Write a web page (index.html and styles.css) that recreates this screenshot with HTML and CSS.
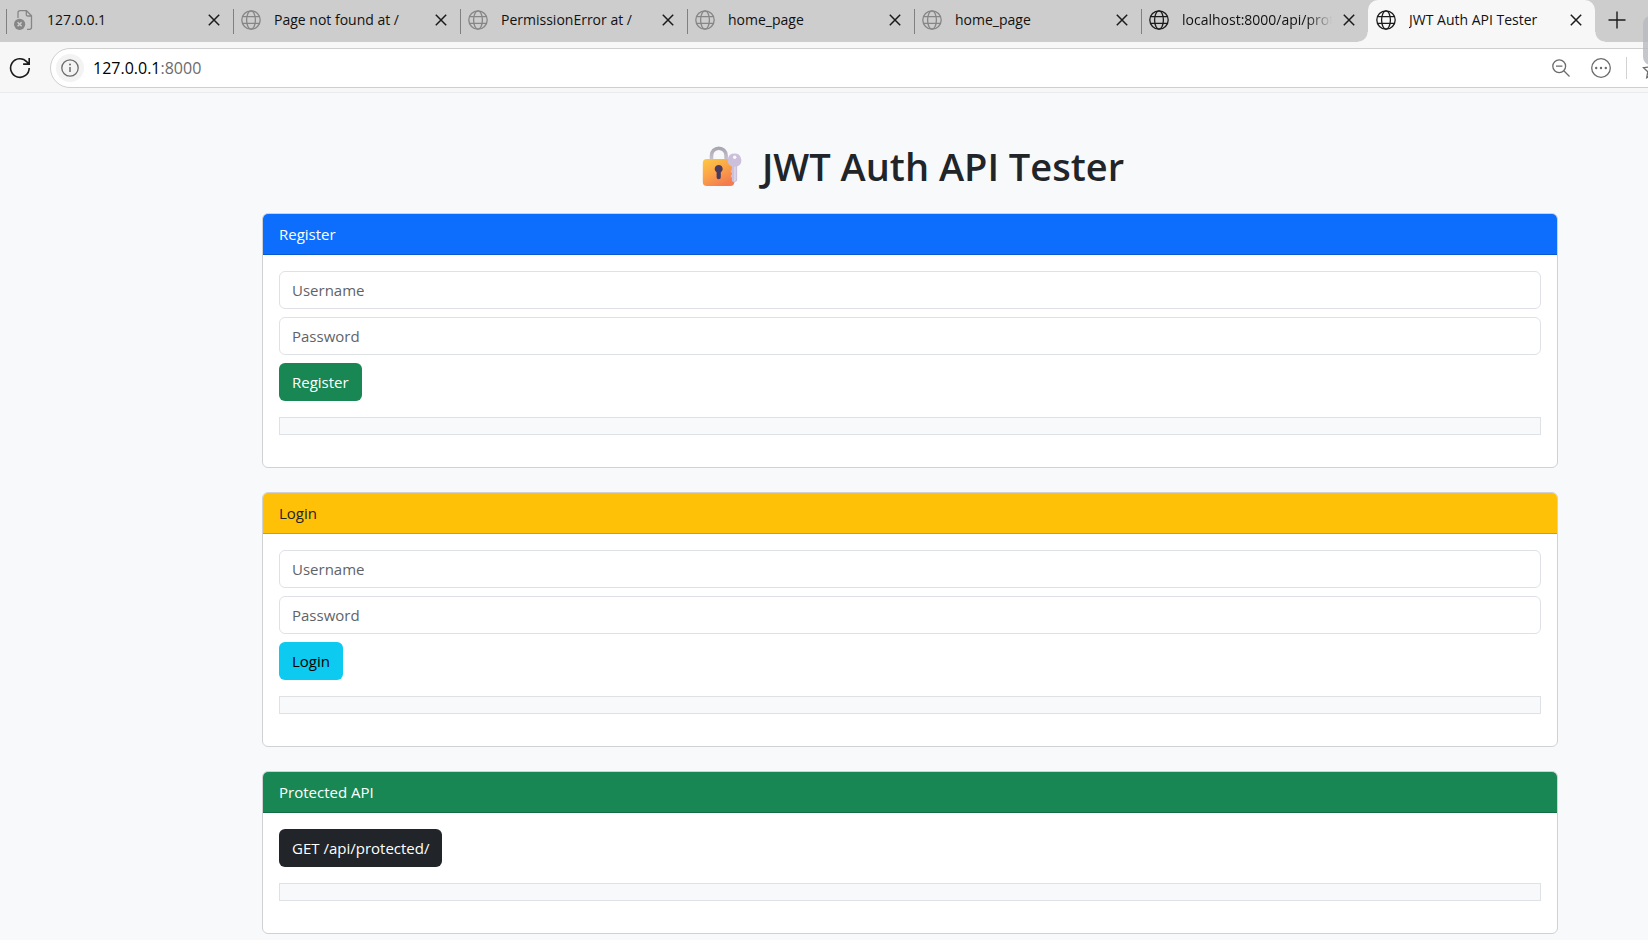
FILE: index.html
```html
<!DOCTYPE html>
<html lang="en">
<head>
<meta charset="utf-8">
<title>JWT Auth API Tester</title>
<link rel="stylesheet" href="styles.css">
</head>
<body>
<svg class="sprite" aria-hidden="true">
  <symbol id="globe" viewBox="0 0 20 20"><g fill="none" stroke="currentColor" stroke-width="1.3"><circle cx="10" cy="10" r="9.2"/><ellipse cx="10" cy="10" rx="4.4" ry="9.2"/><path d="M1.6 6.6h16.8M1.6 13.4h16.8"/></g></symbol>
  <symbol id="close" viewBox="0 0 12 12"><path d="M.8.8l10.4 10.4M11.2.8L.8 11.2" fill="none" stroke="currentColor" stroke-width="1.5"/></symbol>
</svg>
<header class="browser">
  <nav class="tabs" aria-label="Tabs">
    <div class="tab">
      <svg class="tab-icon muted" viewBox="0 0 20 20"><path d="M4 8V2.7C4 1.5 4.700.7 6 .7h6.500l5 5v11.500c0 1.400-.8 2.100-2 2.100H13M12.300.9v3.600c0 1 .5 1.500 1.500 1.500h3.500" fill="none" stroke="currentColor" stroke-width="1.300"/><circle cx="5.600" cy="14.300" r="5.600" fill="currentColor"/><path d="M3.600 12.300l4 4M7.600 12.300l-4 4" stroke="#cdcdcd" stroke-width="1.500"/></svg>
      <a class="tab-title" href="#">127.0.0.1</a>
      <button class="tab-close" aria-label="Close tab"><svg><use href="#close"/></svg></button>
    </div>
    <div class="tab">
      <svg class="tab-icon muted"><use href="#globe"/></svg>
      <a class="tab-title" href="#">Page not found at /</a>
      <button class="tab-close" aria-label="Close tab"><svg><use href="#close"/></svg></button>
    </div>
    <div class="tab">
      <svg class="tab-icon muted"><use href="#globe"/></svg>
      <a class="tab-title" href="#">PermissionError at /</a>
      <button class="tab-close" aria-label="Close tab"><svg><use href="#close"/></svg></button>
    </div>
    <div class="tab">
      <svg class="tab-icon muted"><use href="#globe"/></svg>
      <a class="tab-title" href="#">home_page</a>
      <button class="tab-close" aria-label="Close tab"><svg><use href="#close"/></svg></button>
    </div>
    <div class="tab">
      <svg class="tab-icon muted"><use href="#globe"/></svg>
      <a class="tab-title" href="#">home_page</a>
      <button class="tab-close" aria-label="Close tab"><svg><use href="#close"/></svg></button>
    </div>
    <div class="tab">
      <svg class="tab-icon"><use href="#globe"/></svg>
      <a class="tab-title fade" href="#">localhost:8000/api/protected/</a>
      <button class="tab-close" aria-label="Close tab"><svg><use href="#close"/></svg></button>
    </div>
    <div class="tab active">
      <svg class="tab-icon"><use href="#globe"/></svg>
      <a class="tab-title" href="#" aria-current="page">JWT Auth API Tester</a>
      <button class="tab-close" aria-label="Close tab"><svg><use href="#close"/></svg></button>
    </div>
    <button class="new-tab" aria-label="New tab"><svg viewBox="0 0 18 18"><path d="M9 .5v17M.5 9h17" stroke="currentColor" stroke-width="1.400"/></svg></button>
  </nav>
  <div class="toolbar">
    <button class="reload" aria-label="Reload"><svg viewBox="0 0 22 22"><path d="M20.200 11a9.300 9.300 0 1 1-2.300-6.100L20 7M20.200 1v6.100h-6.100" fill="none" stroke="currentColor" stroke-width="1.600"/></svg></button>
    <div class="address">
      <button class="site-info" aria-label="Site information"><svg viewBox="0 0 18 18"><circle cx="9" cy="9" r="8.200" fill="none" stroke="currentColor" stroke-width="1.300"/><path d="M9 8v5" stroke="currentColor" stroke-width="1.500"/><circle cx="9" cy="5.500" r="1" fill="currentColor"/></svg></button>
      <a class="url" href="#">127.0.0.1<span class="port">:8000</span></a>
      <button class="tool zoom" aria-label="Zoom out"><svg viewBox="0 0 18 18"><g fill="none" stroke="currentColor" stroke-width="1.300"><circle cx="7.200" cy="7.200" r="6.400"/><path d="M11.800 11.800l5.700 5.700M4 7.200h6.400"/></g></svg></button>
      <button class="tool" aria-label="More"><svg viewBox="0 0 20 20"><circle cx="10" cy="10" r="9.300" fill="none" stroke="currentColor" stroke-width="1.300"/><g fill="currentColor"><circle cx="5.200" cy="10" r="1.200"/><circle cx="10" cy="10" r="1.200"/><circle cx="14.800" cy="10" r="1.200"/></g></svg></button>
      <span class="divider"></span>
      <button class="tool star" aria-label="Favorite"><svg viewBox="0 0 20 20"><path d="M10 1.500l2.600 5.400 5.900.8-4.300 4.100 1.100 5.900-5.300-2.800-5.300 2.800 1.100-5.900L1.500 7.700l5.900-.8z" fill="none" stroke="currentColor" stroke-width="1.300"/></svg></button>
    </div>
  </div>
  <span class="edge-handle"></span>
</header>

<main class="page">
  <h1 class="title">
    <svg class="lock" viewBox="0 0 40 42" aria-hidden="true">
      <defs>
        <linearGradient id="body" x1="0" y1="0" x2=".6" y2="1"><stop offset="0" stop-color="#fdc844"/><stop offset=".5" stop-color="#fba648"/><stop offset="1" stop-color="#f47b4f"/></linearGradient>
        <linearGradient id="shackle" x1="0" y1="0" x2="0" y2="1"><stop offset="0" stop-color="#aaa6b0"/><stop offset="1" stop-color="#cbc5d2"/></linearGradient>
      </defs>
      <path d="M9.500 16V10.500a7.300 7.300 0 0 1 14.600 0V16" fill="none" stroke="url(#shackle)" stroke-width="3.600"/>
      <rect x=".8" y="14" width="31.500" height="27" rx="4" fill="url(#body)"/>
      <path d="M16.700 20a3.900 3.900 0 0 0-2.100 7.200v5a2.100 2.100 0 0 0 4.200 0v-5a3.900 3.900 0 0 0-2.100-7.200z" fill="#493a60"/>
      <path d="M32.500 8.500a6.700 6.700 0 0 0-2.600 12.900v3.200l-1.400 1.700 1.400 1.700v1.400l-1.400 1.700 1.400 1.700v3.200l2.200 1.800 3-2V21.400A6.700 6.700 0 0 0 32.500 8.500z" fill="#cbbfdc"/>
      <path d="M33.700 21.400v14.400l-1.500 1V21.800z" fill="#e0d7e8"/>
      <circle cx="32.700" cy="12.300" r="1.700" fill="#f8f9fa"/>
    </svg>
    <span>JWT Auth API Tester</span>
  </h1>

  <section class="card">
    <h2 class="card-header primary">Register</h2>
    <form class="card-body">
      <input class="field" type="text" placeholder="Username" aria-label="Username">
      <input class="field" type="password" placeholder="Password" aria-label="Password">
      <button class="btn success" type="button">Register</button>
      <pre class="output"></pre>
    </form>
  </section>

  <section class="card">
    <h2 class="card-header warning">Login</h2>
    <form class="card-body">
      <input class="field" type="text" placeholder="Username" aria-label="Username">
      <input class="field" type="password" placeholder="Password" aria-label="Password">
      <button class="btn info" type="button">Login</button>
      <pre class="output"></pre>
    </form>
  </section>

  <section class="card">
    <h2 class="card-header success">Protected API</h2>
    <div class="card-body">
      <button class="btn dark" type="button">GET /api/protected/</button>
      <pre class="output"></pre>
    </div>
  </section>
</main>
</body>
</html>
```

FILE: styles.css
```css
* { box-sizing: border-box; }

html, body { height: 100%; }
body {
  margin: 0;
  background: #f8f9fa;
  color: #212529;
  font: 15px/24px "Open Sans", "Noto Sans", sans-serif;
  overflow: hidden;
}

button, input { font: inherit; }
button { cursor: pointer; }
a { color: inherit; text-decoration: none; }
svg { display: block; }
.sprite { display: none; }

/* Browser chrome */
.browser {
  position: relative;
  overflow: hidden;
  background: #f7f7f7;
  color: #1b1b1b;
  border-bottom: 1px solid #ebebeb;
}
.browser button {
  flex: none;
  padding: 0;
  border: 0;
  background: none;
  color: inherit;
}

.tabs {
  display: flex;
  height: 42px;
  padding-left: 6px;
  background: #cdcdcd;
}
.tab {
  position: relative;
  flex: 0 0 227px;
  min-width: 0;
  display: flex;
  align-items: center;
  padding: 0 13px 2px 8px;
}
.tab::before {
  content: "";
  position: absolute;
  left: 0;
  top: 9px;
  width: 1px;
  height: 25px;
  background: #808080;
}
.tab-icon {
  flex: none;
  width: 20px;
  height: 20px;
  margin-right: 13px;
}
.muted { color: #868686; }
.tab-title {
  flex: 1;
  min-width: 0;
  overflow: hidden;
  white-space: nowrap;
  font-size: 14px;
  color: #111;
}
.fade { mask-image: linear-gradient(to right, #000 125px, transparent 150px); }
.tab-close { margin-left: 8px; }
.tab-close svg { width: 12px; height: 12px; }
.active {
  border-radius: 10px 10px 0 0;
  background: #f7f7f7;
}
.active::before, .active::after {
  content: "";
  position: absolute;
  left: -10px;
  top: auto;
  bottom: 0;
  width: 10px;
  height: 10px;
  background: radial-gradient(circle at 0 0, #cdcdcd 9px, #f7f7f7 10px);
}
.active::after {
  left: 100%;
  background: radial-gradient(circle at 100% 0, #cdcdcd 9px, #f7f7f7 10px);
}
.new-tab { margin: 0 12px 2px 13px; }
.new-tab svg { width: 18px; height: 18px; }

.toolbar {
  display: flex;
  align-items: center;
  gap: 19px;
  height: 50px;
  padding: 2px 0 0 9px;
}
.reload svg { width: 22px; height: 22px; }
.address {
  flex: 1;
  display: flex;
  align-items: center;
  height: 40px;
  margin-right: -20px;
  padding-left: 5px;
  border: 1px solid #cfcfcf;
  border-radius: 20px;
  background: #fff;
  color: #6b6b6b;
}
.browser .site-info {
  display: grid;
  place-items: center;
  width: 28px;
  height: 28px;
  border-radius: 50%;
  background: #f3f3f3;
}
.site-info svg { width: 18px; height: 18px; }
.url {
  flex: 1;
  margin-left: 9px;
  font-size: 16px;
  color: #000;
}
.port { color: #6b6b6b; }
.tool { margin-left: 21px; }
.tool svg { width: 20px; height: 20px; }
.zoom svg { width: 18px; height: 18px; }
.divider {
  width: 1px;
  height: 22px;
  margin-left: 15px;
  background: #d2d2d2;
}
.browser .star { margin: 4px 5px 0 15px; }
.edge-handle {
  position: absolute;
  right: -12px;
  top: 16px;
  width: 17px;
  height: 49px;
  border-radius: 8px;
  background: #b6b9c0cc;
}

/* Page */
.page { padding: 49px 90px 24px 262px; }

.title {
  display: flex;
  align-items: center;
  justify-content: center;
  gap: 20px;
  margin: 0 0 23px;
  padding-left: 6px;
  font-size: 38px;
  font-weight: 600;
  line-height: 48px;
}
.lock { width: 40px; height: 42px; }

.card {
  margin-bottom: 24px;
  border: 1px solid #d0d1d2;
  border-radius: 6px;
  background: #fff;
}
.card-header {
  margin: 0;
  padding: 8px 16px;
  border-bottom: 1px solid rgba(0, 0, 0, 0.18);
  border-radius: 5px 5px 0 0;
  font-size: 15px;
  font-weight: 400;
  line-height: 24px;
}
.card-body {
  display: flex;
  flex-direction: column;
  align-items: flex-start;
  gap: 8px;
  padding: 16px;
}
.field {
  width: 100%;
  height: 38px;
  padding: 6px 12px;
  border: 1px solid #dee2e6;
  border-radius: 6px;
  background: #fff;
  color: #212529;
}
.field::placeholder { color: #5f6368; opacity: 1; }
.btn {
  padding: 7px 13px;
  border: 0;
  border-radius: 6px;
}
.output {
  width: 100%;
  margin: 8px 0 16px;
  padding: 8px;
  border: 1px solid #dee2e6;
  background: #f8f9fa;
}

.primary { background: #0d6efd; color: #fff; }
.warning { background: #ffc107; color: #212529; }
.success { background: #198754; color: #fff; }
.info { background: #0dcaf0; color: #000; }
.dark { background: #212529; color: #fff; }
```
